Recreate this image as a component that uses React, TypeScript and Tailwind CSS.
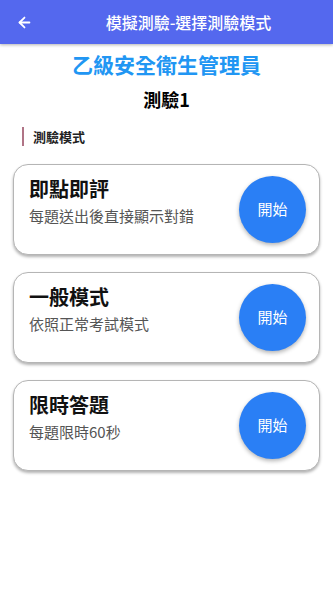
import { ArrowLeft } from 'lucide-react';

const modes = [
  { title: '即點即評', desc: '每題送出後直接顯示對錯' },
  { title: '一般模式', desc: '依照正常考試模式' },
  { title: '限時答題', desc: '每題限時60秒' },
];

export default function App() {
  return (
    <div
      className="w-[333px] h-[592px] bg-white overflow-hidden"
      style={{ fontFamily: '"Noto Sans CJK TC", "Noto Sans", Roboto, sans-serif' }}
    >
      {/* App bar */}
      <div className="h-[44px] bg-[#5468ee] flex items-center shadow-[0_1px_3px_rgba(0,0,0,0.3)]">
        <div className="w-[48px] flex items-center pl-[16px]">
          <ArrowLeft className="w-[17px] h-[17px] text-white" strokeWidth={2.5} />
        </div>
        <div className="flex-1 text-center text-white text-[16px] font-medium pr-[4px]">
          模擬測驗-選擇測驗模式
        </div>
      </div>

      {/* Heading */}
      <div className="flex flex-col items-center pt-[5px]">
        <h1 className="text-[21px] leading-[30px] font-bold text-[#2196f3]">乙級安全衛生管理員</h1>
        <h2 className="text-[18px] leading-[26px] font-bold text-black mt-[7px]">測驗1</h2>
      </div>

      {/* Section label */}
      <div className="flex items-center mt-[15px] ml-[22px]">
        <div className="w-[2px] h-[19px] bg-[#b07486]" />
        <span className="ml-[9px] text-[13px] font-bold text-[#222]">測驗模式</span>
      </div>

      {/* Mode cards */}
      <div className="flex flex-col gap-[17px] px-[13px] mt-[17px]">
        {modes.map((m) => (
          <div
            key={m.title}
            className="h-[91px] rounded-[15px] border border-[#b5b5b5] bg-white shadow-[0_2px_3px_rgba(0,0,0,0.3)] flex items-center pl-[15px] pr-[13px]"
          >
            <div className="flex-1 self-start flex flex-col pt-[10px]">
              <span className="text-[20px] leading-[28px] font-bold text-[#111]">{m.title}</span>
              <span className="text-[15px] leading-[22px] text-[#555] mt-[2px]">{m.desc}</span>
            </div>
            <button className="w-[67px] h-[67px] rounded-full bg-[#2a7ff5] text-white text-[15px] font-normal flex items-center justify-center shadow-[0_2px_4px_rgba(0,0,0,0.3)]">
              開始
            </button>
          </div>
        ))}
      </div>
    </div>
  );
}
